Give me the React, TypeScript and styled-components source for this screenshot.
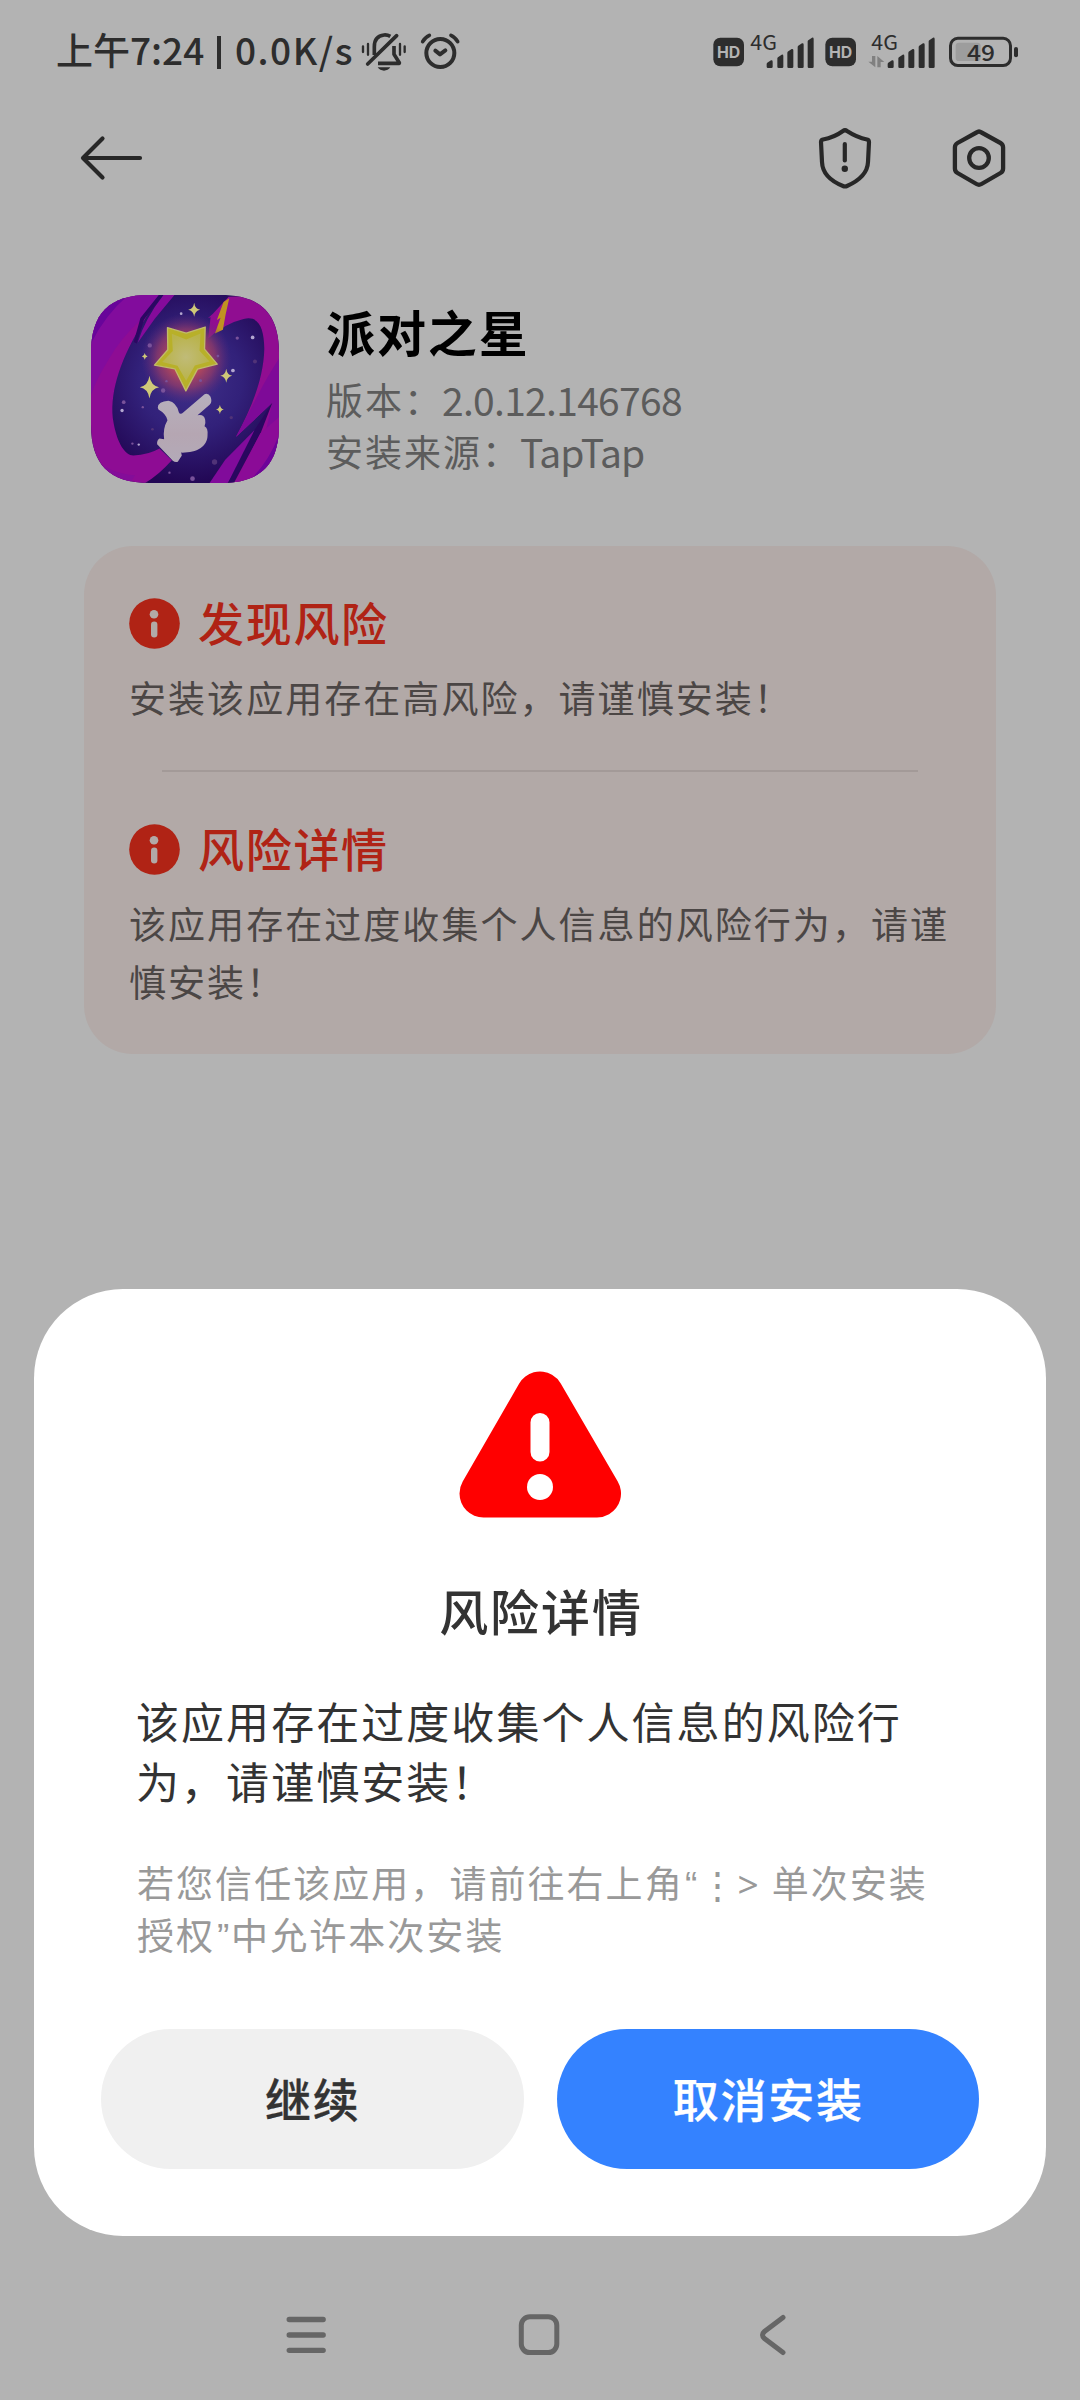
import React from "react";
import styled, { createGlobalStyle } from "styled-components";

const ink = "#2d2d2d";
const cjk = `"Noto Sans CJK SC", "Noto Sans", sans-serif`;

const GlobalStyle = createGlobalStyle`
  body { margin: 0; background: #b3b3b3; }
  * { box-sizing: border-box; }
  svg { display: block; flex: none; }
`;

const Screen = styled.div`
  width: 1080px;
  height: 2400px;
  overflow: hidden;
  display: flex;
  flex-direction: column;
  background: #b3b3b3;
  font-family: ${cjk};

  > * {
    flex: none;
  }
`;

const StatusBar = styled.header`
  height: 104px;
  padding: 0 60px 0 56px;
  display: flex;
  justify-content: space-between;
`;

const StatusGroup = styled.div`
  display: flex;
  align-items: center;
  height: 104px;
`;

const StatusText = styled.span<{ $w: number; $ls?: number }>`
  width: ${(p) => p.$w}px;
  font-size: 37px;
  font-weight: 500;
  line-height: 54px;
  letter-spacing: ${(p) => p.$ls ?? 0}px;
  color: ${ink};
  white-space: nowrap;
  margin-top: -6px;
`;

const Pipe = styled.i`
  width: 4px;
  height: 33px;
  margin: 0 14px 0 13px;
  background: ${ink};
`;

const StatusIcons = styled.div`
  display: flex;
  gap: 12px;
  margin-left: 2px;
`;

const Toolbar = styled.nav`
  height: 107px;
  padding: 0 71px 0 78px;
  display: flex;
  align-items: center;
  justify-content: space-between;
`;

const Actions = styled.div`
  display: flex;
  align-items: center;
  gap: 76px;
`;

const AppRow = styled.section`
  display: flex;
  margin: 84px 0 0 91px;
  height: 188px;
`;

const AppInfo = styled.div`
  padding: 6px 0 0 47px;
`;

const AppName = styled.h1`
  margin: 0 0 12px;
  font-size: 49px;
  font-weight: 700;
  line-height: 60px;
  letter-spacing: 1.9px;
  color: #000;
`;

const AppMeta = styled.p`
  margin: 0;
  display: flex;
  font-size: 37px;
  line-height: 52px;
  letter-spacing: 2px;
  color: #5c5c5c;
`;

const MetaValue = styled.span<{ $ls: number }>`
  margin-left: -1px;
  font-size: 39px;
  letter-spacing: ${(p) => p.$ls}px;
`;

const RiskCard = styled.section`
  width: 912px;
  height: 508px;
  margin: 63px 0 0 84px;
  padding: 52px 45px 0;
  border-radius: 49px;
  background: #b2a9a7;
`;

const RiskHead = styled.div`
  display: flex;
  align-items: center;
  height: 51px;
  gap: 18px;
`;

const RiskTitle = styled.h2`
  margin: -5px 0 0;
  font-size: 46px;
  font-weight: 500;
  line-height: 50px;
  letter-spacing: 1.7px;
  color: #b02315;
`;

const RiskText = styled.p`
  margin: 19px -10px 0 0;
  font-size: 37px;
  line-height: 58px;
  letter-spacing: 2.05px;
  color: #4b4645;
`;

const Divider = styled.hr`
  height: 2px;
  margin: 44px 33px 52px;
  border: 0;
  background: #a39a98;
`;

const Dialog = styled.section`
  width: 1012px;
  height: 947px;
  margin: 235px 0 0 34px;
  padding: 82px 67px 0;
  border-radius: 89px;
  background: #fff;
  display: flex;
  flex-direction: column;
`;

const DialogIcon = styled.div`
  display: flex;
  justify-content: center;
  height: 147px;
`;

const DialogTitle = styled.h2`
  margin: 62px 0 50px;
  padding-left: 2px;
  text-align: center;
  font-size: 49px;
  font-weight: 500;
  line-height: 60px;
  letter-spacing: 1.9px;
  color: #333;
`;

const DialogText = styled.p`
  margin: 0 30px 46px 35px;
  font-size: 43px;
  line-height: 60px;
  letter-spacing: 2.05px;
  color: #333;
`;

const Hint = styled.p`
  margin: 0 30px 69px 36px;
  height: 104px;
  font-size: 37px;
  line-height: 52px;
  letter-spacing: 2.05px;
  color: #999;
  white-space: nowrap;
`;

const Mark = styled.span<{ $w: number }>`
  display: inline-block;
  width: ${(p) => p.$w}px;
  text-align: center;
  letter-spacing: 0;
  font-family: "Noto Sans", "Noto Sans CJK SC", sans-serif;
  line-height: 1;
`;

const Quote = styled(Mark)`
  font-family: "Liberation Sans", sans-serif;
`;

const Buttons = styled.div`
  display: grid;
  grid-template-columns: 1fr 1fr;
  gap: 33px;
`;

const Button = styled.button<{ $primary?: boolean }>`
  height: 140px;
  border: 0;
  border-radius: 70px;
  padding: 0 0 5px 1px;
  font-family: ${cjk};
  font-size: 46px;
  font-weight: 500;
  letter-spacing: 1.7px;
  color: ${(p) => (p.$primary ? "#fff" : "#333")};
  background: ${(p) => (p.$primary ? "#3482ff" : "#f0f0f0")};
  -webkit-text-stroke: 0.3px currentColor;
`;

const NavBar = styled.footer`
  height: 130px;
  margin-top: 34px;
  padding-left: 284px;
  display: grid;
  grid-template-columns: 233px 241px auto;
  align-items: center;
`;

const MutedBell = () => (
  <svg width="46" height="40" viewBox="963 38 138 120" fill="none" stroke={ink} strokeWidth="11">
    <path d="M1003 107V82C1003 58 1014 49 1032 47Q1042 46 1051 51" />
    <path d="M983 134L1070 49" strokeLinecap="round" />
    <path d="M1062 80V105L1078 130V132H1014" strokeLinejoin="round" />
    <path d="M1013 144H1051Q1044 154 1032 154T1013 144Z" fill={ink} stroke="none" />
    <path d="M969 81V98M984 74V106M1080 74V106M1094 81V98" strokeWidth="7" strokeLinecap="round" />
  </svg>
);

const Alarm = () => (
  <svg width="42" height="40" viewBox="1138 38 126 120" fill="none" stroke={ink} strokeWidth="12" strokeLinecap="round">
    <circle cx="1202" cy="101" r="42" />
    <path d="M1187 94L1201 105L1217 93" strokeLinejoin="round" />
    <path d="M1149 67Q1156 54 1169 48M1234 48Q1247 54 1254 67" strokeWidth="11" />
  </svg>
);

const bars = [
  [230, 120],
  [262, 103],
  [292, 86],
  [323, 69],
  [353, 52],
];

const HdBadge = ({ x }: { x: number }) => (
  <>
    <rect x={x} y="53" width="92" height="86" rx="21" fill={ink} />
    <text x={x + 46} y="114" fontSize="47" fontWeight="700" fill="#b3b3b3" textAnchor="middle" fontFamily="Inter, sans-serif" textLength="70" lengthAdjust="spacingAndGlyphs">
      HD
    </text>
  </>
);

const Signal = ({ dx }: { dx: number }) => (
  <>
    {bars.map(([x, y]) => (
      <path key={x} fill={ink} d={`M${x + dx} 140V${y + 12}Q${x + dx} ${y + 9} ${x + dx + 4} ${y + 7}L${x + dx + 13} ${y + 1}Q${x + dx + 18} ${y} ${x + dx + 18} ${y + 5}V140Q${x + dx + 18} 144 ${x + dx + 14} 144H${x + dx + 4}Q${x + dx} 144 ${x + dx} 140Z`} />
    ))}
  </>
);

const Network = () => (
  <svg width="308" height="70" viewBox="66 -9 924 210">
    <HdBadge x={70} />
    <text x="181" y="91" fontSize="61" fill={ink} fontFamily={cjk} textLength="80" lengthAdjust="spacingAndGlyphs">4G</text>
    <Signal dx={0} />
    <HdBadge x={406} />
    <text x="544" y="91" fontSize="61" fill={ink} fontFamily={cjk} textLength="80" lengthAdjust="spacingAndGlyphs">4G</text>
    <path d="M546 108H556V142L535 125H546ZM562 142V108L583 126H572V142Z" fill="#808080" />
    <Signal dx={363} />
    <rect x="797" y="68" width="75" height="55" rx="10" fill="#9d9d9d" />
    <rect x="781.500" y="55" width="180" height="81.500" rx="22" fill="none" stroke={ink} strokeWidth="9" />
    <rect x="972" y="81" width="12" height="31" rx="6" fill={ink} />
    <text x="831" y="122" fontSize="68" fill={ink} fontWeight="500" fontFamily={cjk} textLength="84" lengthAdjust="spacingAndGlyphs">49</text>
  </svg>
);

const BackArrow = () => (
  <svg width="66" height="50" viewBox="78 132.500 66 50" fill="none" stroke="#272727" strokeWidth="4.200" strokeLinecap="round" strokeLinejoin="round">
    <path d="M102.500 138L83 157.500L102.500 177M84 157.500H140" />
  </svg>
);

const Shield = () => (
  <svg width="56" height="64" viewBox="817 127 56 64" fill="none" stroke="#272727" strokeWidth="4.200" strokeLinejoin="round" strokeLinecap="round">
    <path d="M843 132Q845 130.500 847 132Q857 138.500 867 140.500Q869 141 869 143L868 163C867.500 176 856 183 847 187Q845 188 843 187C833 183 822.500 176 822 163L821 143Q821 141 823 140.500Q834 138.500 843 132Z" />
    <path d="M844.800 145V161.500" />
    <circle cx="844.800" cy="169.700" r="3.200" fill="#272727" stroke="none" />
  </svg>
);

const Hexagon = () => (
  <svg width="60" height="64" viewBox="948.500 125.500 60 64" fill="none" stroke="#272727" strokeWidth="4.300" strokeLinejoin="round">
    <path d="M976 132Q978.500 130 981 132L1000 142.500Q1002.600 144 1002.600 147V168Q1002.600 171 1000 172.500L981 183.500Q978.500 185 976 183.500L957 172.500Q954.400 171 954.400 168V147Q954.400 144 957 142.500Z" />
    <circle cx="978.500" cy="157.500" r="9.800" />
  </svg>
);

const Sparkle = ({ x, y, r }: { x: number; y: number; r: number }) => (
  <path
    fill="#cfc878"
    d={`M${x} ${y - r}Q${x + r * 0.12} ${y - r * 0.12} ${x + r * 0.85} ${y}Q${x + r * 0.12} ${y + r * 0.12} ${x} ${y + r}Q${x - r * 0.12} ${y + r * 0.12} ${x - r * 0.85} ${y}Q${x - r * 0.12} ${y - r * 0.12} ${x} ${y - r}Z`}
  />
);

const AppLogo = () => (
  <svg width="188" height="188" viewBox="33 45 563 563">
    <defs>
      <clipPath id="logoShape">
        <path d="M33 220C33 100 88 45 208 45H421C541 45 596 100 596 220V433C596 553 541 608 421 608H208C88 608 33 553 33 433Z" />
      </clipPath>
      <radialGradient id="logoSpace" gradientUnits="userSpaceOnUse" cx="330" cy="300" r="310">
        <stop offset="0" stopColor="#40308a" />
        <stop offset=".5" stopColor="#32217a" />
        <stop offset="1" stopColor="#220754" />
      </radialGradient>
      <radialGradient id="logoGlow" gradientUnits="userSpaceOnUse" cx="318" cy="235" r="135">
        <stop offset=".3" stopColor="#c34d55" />
        <stop offset=".65" stopColor="#923b69" stopOpacity=".75" />
        <stop offset="1" stopColor="#5c2a7c" stopOpacity="0" />
      </radialGradient>
      <radialGradient id="logoStar">
        <stop offset="0" stopColor="#c0bb78" />
        <stop offset="1" stopColor="#b9b34a" />
      </radialGradient>
      <linearGradient id="logoHand" x1="0" y1="0" x2="0" y2="1">
        <stop offset="0" stopColor="#b7b0bd" />
        <stop offset=".6" stopColor="#b5a6b2" />
        <stop offset="1" stopColor="#b3aab8" />
      </linearGradient>
    </defs>
    <g clipPath="url(#logoShape)">
      <rect x="33" y="45" width="563" height="563" fill="url(#logoSpace)" />
      <path d="M33 45H238L175 150C120 245 85 345 101 430C112 490 135 525 160 526Q205 524 238 505L275 540Q235 585 195 608H33Z" fill="#8e0c94" />
      <path d="M33 45H240L186 116Q120 175 85 240Q50 295 33 345Z" fill="#820c9d" />
      <path d="M33 45H145Q75 105 33 190Z" fill="#68059a" />
      <path d="M250 45H283L224 116L173 188Q195 115 250 45Z" fill="#850b9b" />
      <path d="M248 45L192 118L170 190L161 186L181 114L236 45Z" fill="#2b0762" />
      <path d="M33 530Q90 580 165 585L150 608H33Z" fill="#840d99" />
      <path d="M445 50L398 101L383 115L391 112L384 175Q435 130 490 117C535 105 551 145 552 205C550 300 510 390 467 470L576 368L524 475L445 608H608V45Z" fill="#900d91" />
      <path d="M596 235Q555 300 538 335L467 470L576 368L550 480L596 420Z" fill="#7e0a98" />
      <path d="M388 608L435 538L523 449L499 518L443 608Z" fill="#810b9b" />
      <path d="M523 449L576 368L542 456L461 608H443Z" fill="#29075f" />
      <path d="M540 460L596 410V608H465Z" fill="#8b0b97" />
      <path d="M596 465Q560 555 500 608H596Z" fill="#6c0499" />
      <path d="M447 55L430 66L410 120L421 113L404 160L428 149L436 104Z" fill="#c09221" />
      <circle cx="318" cy="235" r="135" fill="url(#logoGlow)" />
      <path d="M262 143L318 159L375 141L373 207L411 252L352 267L317 332L284 266L223 255L263 209Z" fill="#b8b029" stroke="#c0b96b" strokeWidth="4" strokeLinejoin="round" />
      <path d="M275 161L318 178L361 160L358 212L388 244L344 256L318 302L292 257L246 246L278 213Z" fill="url(#logoStar)" />
      <path d="M233 382Q234 364 265 362Q289 367 296 396Q300 405 310 396L373 342Q384 337 391 350Q397 366 389 373L352 405Q372 401 375 419Q377 428 373 438Q384 443 382 465C382 500 348 518 303 517L305 526L293 544Q286 548 278 541L231 492Q230 480 238 475L252 477Q247 446 262 420Q258 401 235 388Z" fill="url(#logoHand)" />
      <Sparkle x={208} y={321} r={34} />
      <Sparkle x={342} y={89} r={21} />
      <Sparkle x={438} y={287} r={21} />
      <Sparkle x={419} y={388} r={14} />
      <Sparkle x={194} y={229} r={10} />
      <g fill="#b3a6cf">
        <circle cx="517" cy="172" r="5.500" />
        <circle cx="458" cy="271" r="5.500" />
        <circle cx="126" cy="391" r="5" />
        <circle cx="303" cy="101" r="4" />
        <circle cx="176" cy="493" r="3.500" />
      </g>
      <g fill="#79529a">
        <circle cx="209" cy="196" r="6.500" />
        <circle cx="249" cy="331" r="6.500" />
        <circle cx="337" cy="595" r="7" />
        <circle cx="131" cy="366" r="5.500" />
        <circle cx="471" cy="174" r="5" />
        <circle cx="188" cy="381" r="3.500" />
        <circle cx="361" cy="301" r="4.500" />
        <circle cx="413" cy="228" r="4" />
        <circle cx="157" cy="490" r="3.500" />
        <circle cx="268" cy="577" r="3.500" />
        <circle cx="259" cy="303" r="3.500" />
      </g>
      <g fill="#513378">
        <circle cx="524" cy="244" r="6" />
        <circle cx="453" cy="412" r="5" />
        <circle cx="403" cy="545" r="8" />
        <circle cx="217" cy="447" r="4" />
      </g>
    </g>
  </svg>
);

const InfoIcon = () => (
  <svg width="51" height="51" viewBox="0 0 51 51">
    <circle cx="25.500" cy="25.500" r="25.300" fill="#b02315" />
    <circle cx="25" cy="16.200" r="4.300" fill="#b2a9a7" />
    <rect x="22" y="23.500" width="6.400" height="16" rx="3.200" fill="#b2a9a7" />
  </svg>
);

const WarningIcon = () => (
  <svg width="162" height="147" viewBox="459 1371 162 147">
    <path d="M540 1395.500L597 1493.500H483.500Z" fill="#f00" stroke="#f00" strokeWidth="48" strokeLinejoin="round" />
    <rect x="530.500" y="1413" width="19" height="48.500" rx="9.500" fill="#fff" />
    <circle cx="540" cy="1487" r="13" fill="#fff" />
  </svg>
);

const MenuIcon = () => (
  <svg width="44" height="44" viewBox="0 0 44 44" stroke="#666" strokeWidth="5.300" strokeLinecap="round">
    <path d="M5.200 6.500H39.200M5.200 22H39.200M5.200 37.300H39.200" />
  </svg>
);

const HomeIcon = () => (
  <svg width="44" height="44" viewBox="517 2313 44 44" fill="none" stroke="#666" strokeWidth="5">
    <rect x="521.300" y="2316.800" width="35.500" height="35.800" rx="8.500" />
  </svg>
);

const BackIcon = () => (
  <svg width="30" height="44" viewBox="758 2313 30 44" fill="none" stroke="#666" strokeWidth="5" strokeLinecap="round">
    <path d="M783 2317.500L764.500 2331.500Q760.500 2335 764.500 2338.500L783 2352.500" />
  </svg>
);

interface RiskProps {
  title: string;
  children: React.ReactNode;
}

const Risk = ({ title, children }: RiskProps) => (
  <>
    <RiskHead>
      <InfoIcon />
      <RiskTitle>{title}</RiskTitle>
    </RiskHead>
    <RiskText>{children}</RiskText>
  </>
);

export default function App() {
  return (
    <Screen>
      <GlobalStyle />
      <StatusBar>
        <StatusGroup>
          <StatusText $w={148}>上午7:24</StatusText>
          <Pipe />
          <StatusText $w={124} $ls={1.5}>0.0K/s</StatusText>
          <StatusIcons>
            <MutedBell />
            <Alarm />
          </StatusIcons>
        </StatusGroup>
        <StatusGroup>
          <Network />
        </StatusGroup>
      </StatusBar>
      <Toolbar>
        <BackArrow />
        <Actions>
          <Shield />
          <Hexagon />
        </Actions>
      </Toolbar>
      <AppRow>
        <AppLogo />
        <AppInfo>
          <AppName>派对之星</AppName>
          <AppMeta>
            版本：<MetaValue $ls={-0.7}>2.0.12.146768</MetaValue>
          </AppMeta>
          <AppMeta>
            安装来源：<MetaValue $ls={-1}>TapTap</MetaValue>
          </AppMeta>
        </AppInfo>
      </AppRow>
      <RiskCard>
        <Risk title="发现风险">安装该应用存在高风险，请谨慎安装！</Risk>
        <Divider />
        <Risk title="风险详情">
          该应用存在过度收集个人信息的风险行为，请谨
          <br />
          慎安装！
        </Risk>
      </RiskCard>
      <Dialog>
        <DialogIcon>
          <WarningIcon />
        </DialogIcon>
        <DialogTitle>风险详情</DialogTitle>
        <DialogText>
          该应用存在过度收集个人信息的风险行
          <br />
          为，请谨慎安装！
        </DialogText>
        <Hint>
          若您信任该应用，请前往右上角<Quote $w={15}>“</Quote>
          <Mark $w={26}>⋮</Mark>
          <Mark $w={47}>&gt;</Mark>单次安装
          <br />
          授权<Quote $w={16}>”</Quote>中允许本次安装
        </Hint>
        <Buttons>
          <Button>继续</Button>
          <Button $primary>取消安装</Button>
        </Buttons>
      </Dialog>
      <NavBar>
        <MenuIcon />
        <HomeIcon />
        <BackIcon />
      </NavBar>
    </Screen>
  );
}
